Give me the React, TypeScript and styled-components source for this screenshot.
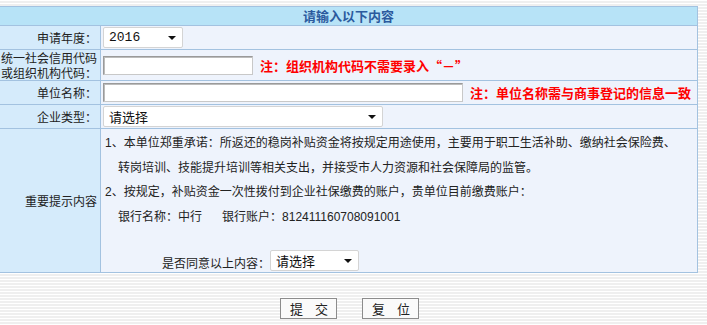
import React from 'react';
import styled, { createGlobalStyle } from 'styled-components';

const GlobalStyle = createGlobalStyle`
  html, body {
    margin: 0;
    padding: 0;
  }
  body {
    width: 707px;
    height: 325px;
    overflow: hidden;
    background: repeating-linear-gradient(to bottom, #ffffff 0 1px, #efefef 1px 3px);
    font-family: "Noto Sans CJK SC", "Liberation Sans", sans-serif;
    font-size: 12px;
    color: #222;
  }
`;

const Page = styled.div`
  padding-top: 6px;
  margin-left: -1px;
  width: 699px;
`;

const FormTable = styled.table`
  width: 100%;
  border-collapse: collapse;
  table-layout: fixed;
  border: 1px solid #a3c2e0;
`;

const Col = styled.col<{ $w?: number }>`
  width: ${p => (p.$w ? `${p.$w}px` : 'auto')};
`;

const TitleCell = styled.th`
  height: 18px;
  padding: 0;
  background: #b7e3f7;
  border: 1px solid #a3c2e0;
  color: #2b5a9e;
  font-size: 13px;
  font-weight: bold;
  text-align: center;
  line-height: 18px;
`;

const LabelCell = styled.td`
  padding: 0 3px 0 0;
  background: #d5ebfb;
  border: 1px solid #a3c2e0;
  text-align: right;
  vertical-align: middle;
  line-height: 15px;
  color: #222;
  white-space: nowrap;
`;

const ValueCell = styled.td<{ $h: number }>`
  height: ${p => p.$h - 1}px;
  padding: 0 0 0 2px;
  background: #eef3fc;
  border: 1px solid #a3c2e0;
  vertical-align: middle;
`;

const Line = styled.div`
  display: flex;
  align-items: center;
  gap: 7px;
`;

const TextInput = styled.input<{ $w: number }>`
  box-sizing: border-box;
  width: ${p => p.$w}px;
  height: 19px;
  margin: 0;
  padding: 0 3px;
  background: #fff;
  border: 1px solid #9a9a9a;
  border-right-color: #c8c8c8;
  border-bottom-color: #c8c8c8;
  box-shadow: inset 1px 1px 0 #bcbcbc;
  font: inherit;
`;

const Note = styled.span`
  color: #ff0000;
  font-size: 13px;
  font-weight: bold;
  white-space: nowrap;
`;

const FakeSelect = styled.div<{ $w: number; $mono?: boolean }>`
  box-sizing: border-box;
  width: ${p => p.$w}px;
  height: 21px;
  display: flex;
  align-items: center;
  justify-content: space-between;
  padding: 0 6px 0 5px;
  background: #fff;
  border: 1px solid #d4d4d4;
  border-radius: 2px;
  font-family: ${p => (p.$mono ? '"Liberation Mono", monospace' : 'inherit')};
  font-size: 13px;
  color: #111;
`;

const Arrow = styled.span`
  width: 0;
  height: 0;
  border-left: 4px solid transparent;
  border-right: 4px solid transparent;
  border-top: 4px solid #111;
`;

const Notice = styled.div`
  padding: 1px 0 1px 2px;
  line-height: 24px;
  color: #222;
`;

const NoticeLine = styled.div<{ $indent?: boolean }>`
  padding-left: ${p => (p.$indent ? 13 : 0)}px;
  white-space: nowrap;
`;

const Num = styled.span`
  font-family: "Liberation Sans", sans-serif;
`;

const Gap = styled.span`
  display: inline-block;
  width: 20px;
`;

const AgreeRow = styled.div`
  display: flex;
  align-items: flex-end;
  margin-top: 21px;
  padding-left: 57px;
  line-height: 16px;
`;

const Buttons = styled.div`
  display: flex;
  justify-content: center;
  gap: 25px;
  margin-top: 25px;
  padding-left: 2px;
`;

const Button = styled.button`
  box-sizing: border-box;
  width: 57px;
  height: 21px;
  display: flex;
  align-items: center;
  justify-content: space-between;
  padding: 0 8px 0 9px;
  background: #fafafa;
  border: 1px solid #8c8c8c;
  font-family: "Noto Sans CJK SC", sans-serif;
  font-size: 13px;
  line-height: 15px;
  color: #222;
  cursor: pointer;
`;

export default function App() {
  return (
    <>
      <GlobalStyle />
      <Page>
        <FormTable>
          <colgroup>
            <Col $w={101} />
            <Col />
          </colgroup>
          <tbody>
            <tr>
              <TitleCell colSpan={2}>请输入以下内容</TitleCell>
            </tr>
            <tr>
              <LabelCell>申请年度：</LabelCell>
              <ValueCell $h={24}>
                <FakeSelect $w={80} $mono>
                  2016
                  <Arrow />
                </FakeSelect>
              </ValueCell>
            </tr>
            <tr>
              <LabelCell>
                统一社会信用代码
                <br />
                或组织机构代码：
              </LabelCell>
              <ValueCell $h={31}>
                <Line>
                  <TextInput $w={150} />
                  <Note>注：组织机构代码不需要录入“－”</Note>
                </Line>
              </ValueCell>
            </tr>
            <tr>
              <LabelCell>单位名称：</LabelCell>
              <ValueCell $h={24}>
                <Line>
                  <TextInput $w={360} />
                  <Note>注：单位名称需与商事登记的信息一致</Note>
                </Line>
              </ValueCell>
            </tr>
            <tr>
              <LabelCell>企业类型：</LabelCell>
              <ValueCell $h={24}>
                <FakeSelect $w={280}>
                  请选择
                  <Arrow />
                </FakeSelect>
              </ValueCell>
            </tr>
            <tr>
              <LabelCell>重要提示内容</LabelCell>
              <ValueCell $h={144}>
                <Notice>
                  <NoticeLine>
                    <Num>1</Num>、本单位郑重承诺：所返还的稳岗补贴资金将按规定用途使用，主要用于职工生活补助、缴纳社会保险费、
                  </NoticeLine>
                  <NoticeLine $indent>
                    转岗培训、技能提升培训等相关支出，并接受市人力资源和社会保障局的监管。
                  </NoticeLine>
                  <NoticeLine>
                    <Num>2</Num>、按规定，补贴资金一次性拨付到企业社保缴费的账户，贵单位目前缴费账户：
                  </NoticeLine>
                  <NoticeLine $indent>
                    银行名称：中行<Gap />银行账户：<Num>812411160708091001</Num>
                  </NoticeLine>
                  <AgreeRow>
                    是否同意以上内容：
                    <FakeSelect $w={89}>
                      请选择
                      <Arrow />
                    </FakeSelect>
                  </AgreeRow>
                </Notice>
              </ValueCell>
            </tr>
          </tbody>
        </FormTable>
        <Buttons>
          <Button type="button">
            <span>提</span>
            <span>交</span>
          </Button>
          <Button type="button">
            <span>复</span>
            <span>位</span>
          </Button>
        </Buttons>
      </Page>
    </>
  );
}
